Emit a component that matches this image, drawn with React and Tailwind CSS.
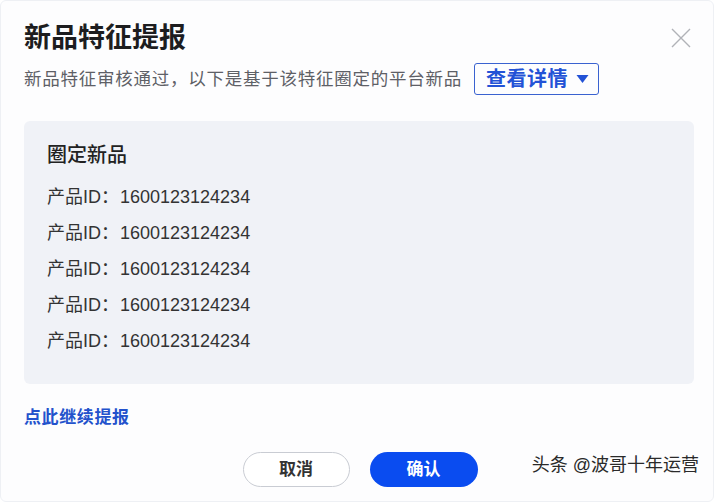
import React from "react";

const ids = ["1600123124234", "1600123124234", "1600123124234", "1600123124234", "1600123124234"];

const font = { fontFamily: '"Liberation Sans", "Noto Sans CJK SC", sans-serif' };

export default function App() {
  return (
    <div
      className="relative flex h-[502px] w-[714px] flex-col overflow-hidden rounded-[6px] border border-[#eef0f4] bg-[#fdfdfe] pl-[23px] pr-[19px]"
      style={font}
    >
      <div className="mt-[21px] flex items-center justify-between">
        <h1 className="text-[27px] font-bold leading-[32px] text-[#1d1d1f]">新品特征提报</h1>
        <svg className="mr-[2px] h-[22px] w-[22px]" viewBox="0 0 22 22" fill="none" stroke="#b0b2b8" strokeWidth="1.4">
          <path d="M2 2 L20 20 M20 2 L2 20" />
        </svg>
      </div>
      <div className="mt-[9px] flex h-[32px] items-center">
        <p className="text-[17.5px] leading-[32px] tracking-[0.75px] text-[#5e6066]">新品特征审核通过，以下是基于该特征圈定的平台新品</p>
        <button className="ml-[12px] flex h-[32px] items-center gap-[7px] rounded-[3px] border-[1.5px] border-[#3a62d0] pl-[11px] pr-[8px] text-[20px] font-bold tracking-[0.5px] text-[#2352d6]">
          查看详情
          <svg className="h-[10px] w-[15px]" viewBox="0 0 14 10">
            <path d="M1 1 H13 L7 9 Z" fill="#2352d6" />
          </svg>
        </button>
      </div>

      <div className="mt-[26px] rounded-[6px] bg-[#f0f2f7] px-[23px] pb-[25px] pt-[22px]">
        <h2 className="text-[20px] font-medium leading-[24px] text-[#222]">圈定新品</h2>
        <div className="mt-[12px] flex flex-col">
          {ids.map((id, i) => (
            <div key={i} className="flex h-[36px] items-center text-[18px] text-[#333]">
              <span>产品ID：</span>
              <span className="ml-[1px]">{id}</span>
            </div>
          ))}
        </div>
      </div>

      <a className="mt-[22px] text-[17px] font-bold leading-[24px] tracking-[0.6px] text-[#2352cc]">点此继续提报</a>

      <div className="mt-[22px] flex justify-center gap-[20px] pl-[2px]">
        <button className="h-[35px] w-[107px] rounded-full border border-[#c9ccd3] bg-white text-[17px] font-bold text-[#333]">
          取消
        </button>
        <button className="h-[35px] w-[108px] rounded-full bg-[#0a4cf0] text-[17px] font-bold text-white">
          确认
        </button>
      </div>

      <div className="absolute bottom-[24px] right-[14px] text-[18px] leading-[24px] text-[#2a2a2a] [text-shadow:0_0_2px_#fff]">
        头条 @波哥十年运营
      </div>
    </div>
  );
}
